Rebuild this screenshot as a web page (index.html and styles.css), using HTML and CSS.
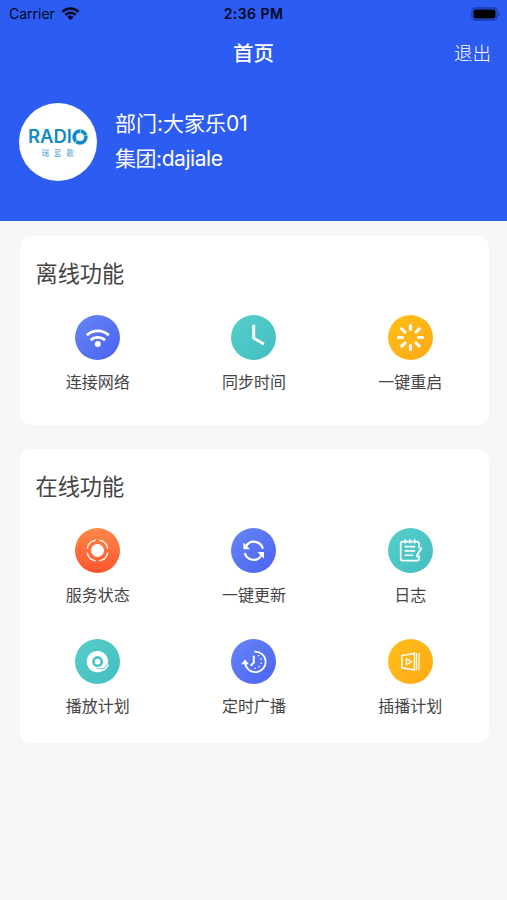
FILE: index.html
```html
<!DOCTYPE html>
<html lang="zh-CN">
<head>
    <meta charset="UTF-8">
    <meta name="viewport" content="width=device-width, initial-scale=1.0">
    <title>首页</title>
    <link rel="stylesheet" href="styles.css">
</head>
<body>
    <header class="header">
        <div class="status-bar">
            <div class="carrier">
                <span>Carrier</span>
                <svg class="wifi" viewBox="0 0 20 15">
                    <path d="M1.5 5.8a12 12 0 0 1 17 0M4.6 9a7.6 7.6 0 0 1 10.8 0" fill="none" stroke="#000722" stroke-width="2.6"/>
                    <path d="M6.7 11.2a4.8 4.8 0 0 1 6.6 0L10 14.6z" fill="#000722"/>
                </svg>
            </div>
            <span class="time">2:36 PM</span>
            <svg class="battery" viewBox="0 0 30 14">
                <rect x="1" y="1" width="25" height="12" rx="3.5" fill="none" stroke="#1d3aa6" stroke-width="1.3"/>
                <rect x="2.5" y="2.5" width="22" height="9" rx="2" fill="#000"/>
                <path d="M27.3 5a2.1 2.1 0 0 1 0 4z" fill="#1d3aa6"/>
            </svg>
        </div>

        <nav class="nav-bar">
            <h1 class="nav-title">首页</h1>
            <a class="logout">退出</a>
        </nav>

        <div class="profile">
            <div class="avatar">
                <div class="logo">
                    <span>RADI</span>
                    <svg class="logo-o" viewBox="0 0 16 16">
                        <circle cx="8" cy="8" r="5.8" fill="none" stroke="#138bc5" stroke-width="3.8"/>
                        <path d="M9 0l-.8 4M15.5 6l-4 1.2M3 14l2.4-3.4" stroke="#fff" stroke-width=".6"/>
                    </svg>
                </div>
                <div class="logo-sub">瑞蓝歌</div>
            </div>
            <div class="info">
                <p>部门:大家乐01</p>
                <p class="group">集团:dajiale</p>
            </div>
        </div>
    </header>

    <main class="main">
        <section class="card offline">
            <h2 class="card-title">离线功能</h2>
            <div class="menu">
                <div class="menu-item">
                    <svg class="icon blue" viewBox="0 0 45 45">
                        <path d="M11.8 20.2a16 16 0 0 1 22 0M15.7 25.3a10.2 10.2 0 0 1 14.2 0" stroke-width="2.8"/>
                        <circle class="solid" cx="22.8" cy="29" r="3"/>
                    </svg>
                    <span>连接网络</span>
                </div>
                <div class="menu-item">
                    <svg class="icon teal" viewBox="0 0 45 45">
                        <path d="M22.7 9.8v13.4l10.2 5.8" stroke-width="3"/>
                    </svg>
                    <span>同步时间</span>
                </div>
                <div class="menu-item">
                    <svg class="icon yellow" viewBox="0 0 45 45">
                        <path d="M22.5 10.5v4M22.5 30.5v4M10.5 22.5h4M30.5 22.5h4M13.8 13.8l3.2 3.2M28 28l3.2 3.2M31.2 13.8l-3.2 3.2M17 28l-3.2 3.2" stroke-width="3.1" stroke-linecap="round"/>
                    </svg>
                    <span>一键重启</span>
                </div>
            </div>
        </section>

        <section class="card online">
            <h2 class="card-title">在线功能</h2>
            <div class="menu">
                <div class="menu-item">
                    <svg class="icon orange" viewBox="0 0 45 45">
                        <circle class="solid" cx="22.5" cy="22.5" r="6.5"/>
                        <path d="M24.3 12.2a10.4 10.4 0 0 1 8.5 8.5M32.8 24.3a10.4 10.4 0 0 1-8.5 8.5M20.7 32.8a10.4 10.4 0 0 1-8.5-8.5M12.2 20.7a10.4 10.4 0 0 1 8.5-8.5" stroke-width="1.3"/>
                    </svg>
                    <span>服务状态</span>
                </div>
                <div class="menu-item">
                    <svg class="icon blue" viewBox="0 0 45 45">
                        <path d="M15 18.6a9 9 0 0 1 16.8 2.2M13.8 25a9 9 0 0 0 16.6 2.2" stroke-width="2.2"/>
                        <path class="solid" d="M12.4 14.5v6.7h6.5zM33 30.8v-6.7h-6.5z"/>
                    </svg>
                    <span>一键更新</span>
                </div>
                <div class="menu-item">
                    <svg class="icon teal" viewBox="0 0 45 45">
                        <path d="M31 20v-4.4a2 2 0 0 0-2-2H14.7a2 2 0 0 0-2 2v15a2 2 0 0 0 2 2H29a2 2 0 0 0 2-2v-3.4" stroke-width="1.7"/>
                        <path d="M17.3 11.2v4.2M22 11.2v4.2M26.7 11.2v4.2" stroke-width="1.5"/>
                        <path d="M16.8 18.6h10.4M16.8 22.9h10.4M16.8 27.2h8.4" stroke-width="1.6"/>
                        <path d="M33.7 19.5l-4.5 7.6-.6 2.2" stroke-width="2"/>
                    </svg>
                    <span>日志</span>
                </div>
                <div class="menu-item">
                    <svg class="icon teal" viewBox="0 0 45 45">
                        <circle class="solid" cx="22.4" cy="22.6" r="10.7"/>
                        <circle class="cut" cx="22.6" cy="22.6" r="4.2" stroke-width="2.6"/>
                        <path class="cut" d="M34.2 23.2l-5.2 6.6h-7.5" stroke-width="1"/>
                        <path d="M33.6 25.5l-4 5.3h-8.4" stroke-width="1.3"/>
                    </svg>
                    <span>播放计划</span>
                </div>
                <div class="menu-item">
                    <svg class="icon blue" viewBox="0 0 45 45">
                        <path d="M23.3 12.6a10.3 10.3 0 1 1-9.2 11.6" stroke-width="1.8"/>
                        <path class="solid" d="M10.2 25.2l3.8-4.7 3.9 4.7z"/>
                        <path d="M22.8 16.7v6.9l-3.2 3.2" stroke-width="2"/>
                        <path d="M27.2 17.1l.8-1M29.5 20.2l1.2-.4M29.7 24l1.2.4M27.7 27.3l.8 1M24 28.8v1.3" stroke-width="1.5"/>
                    </svg>
                    <span>定时广播</span>
                </div>
                <div class="menu-item">
                    <svg class="icon yellow" viewBox="0 0 45 45">
                        <path d="M13.9 16.4l12.6-2v16.4l-12.6-2z" stroke-width="1.5"/>
                        <path d="M18.4 19.7v6l5-3z" stroke-width="1.3"/>
                        <path d="M28.7 14v17.2M31 14v17.2" stroke-width="1.1"/>
                    </svg>
                    <span>插播计划</span>
                </div>
            </div>
        </section>
    </main>
</body>
</html>
```
FILE: styles.css
```css
* {
    box-sizing: border-box;
}

body {
    margin: 0;
    min-height: 100vh;
    background-color: #f5f7f8;
    color: #444;
    font-family: Inter, 'Noto Sans CJK SC', sans-serif;
}

h1, h2, p {
    margin: 0;
    font-weight: 400;
}

.header {
    height: 221px;
    background-color: #2d5cf3;
    color: #fff;
}

.status-bar {
    display: grid;
    grid-template-columns: 1fr auto 1fr;
    align-items: center;
    height: 27px;
    padding: 0 6px 0 9px;
    color: #000722;
    font-size: 14px;
}

.carrier {
    display: flex;
    align-items: center;
    gap: 6px;
}

.wifi {
    width: 19px;
    height: 15px;
}

.time {
    font-weight: 600;
    letter-spacing: 0.45px;
    margin-right: 3px;
}

.battery {
    width: 30px;
    height: 14px;
    justify-self: end;
}

.nav-bar {
    display: grid;
    grid-template-columns: 1fr auto 1fr;
    align-items: center;
    height: 50px;
    padding: 0 16px;
}

.nav-title {
    grid-column: 2;
    font-size: 20.5px;
    font-weight: 500;
}

.logout {
    justify-self: end;
    font-size: 18.5px;
    font-weight: 300;
}

.profile {
    display: flex;
    align-items: center;
    gap: 18px;
    padding: 26px 19px 0;
}

.avatar {
    display: flex;
    flex-direction: column;
    align-items: center;
    width: 78px;
    height: 78px;
    padding-top: 22px;
    border-radius: 50%;
    background-color: #fff;
    color: #138bc5;
}

.logo {
    display: flex;
    align-items: center;
    font-size: 18.5px;
    font-weight: 600;
    line-height: 23px;
}

.logo-o {
    width: 16px;
    height: 16px;
}

.logo-sub {
    font-size: 7.5px;
    line-height: 11px;
    letter-spacing: 4.8px;
    padding-left: 4px;
    opacity: 0.8;
}

.info {
    font-size: 21px;
    font-weight: 300;
    line-height: 35px;
    margin-top: -2px;
}

.group {
    letter-spacing: -0.45px;
}

.main {
    display: flex;
    flex-direction: column;
    gap: 24px;
    padding: 15px 18.5px 0 19.5px;
}

.card {
    border-radius: 11px;
    background-color: #fff;
    padding-top: 22px;
}

.offline {
    height: 189px;
}

.online {
    height: 294px;
}

.card-title {
    padding-left: 16px;
    font-size: 22.2px;
    line-height: 32px;
}

.menu {
    display: grid;
    grid-template-columns: repeat(3, 1fr);
    row-gap: 31px;
    padding-top: 25px;
}

.menu-item {
    display: flex;
    flex-direction: column;
    align-items: center;
    gap: 9px;
    font-size: 16px;
    line-height: 26px;
}

.icon {
    width: 45px;
    height: 45px;
    border-radius: 50%;
    fill: none;
    stroke: #fff;
}

.solid {
    fill: #fff;
    stroke: none;
}

.cut {
    stroke: #4bc5c5;
}

.blue {
    background: linear-gradient(135deg, #6786f5, #4962f2);
}

.teal {
    background: linear-gradient(135deg, #56cfcb, #43bdc0);
}

.yellow {
    background: linear-gradient(135deg, #ffc018, #fea915);
}

.orange {
    background: linear-gradient(#ff8848, #fd552f);
}
```
